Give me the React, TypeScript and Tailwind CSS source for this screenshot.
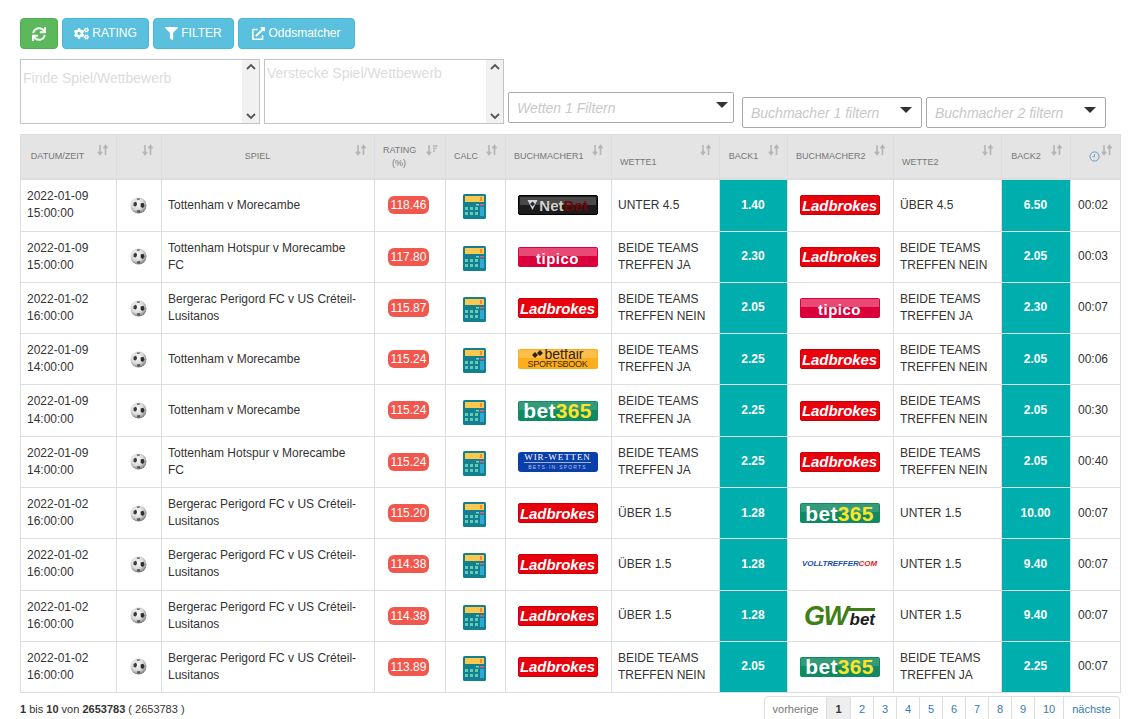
import React from 'react';
import { FaSync, FaCogs, FaFilter, FaExternalLinkAlt } from 'react-icons/fa';

const colWidths = [96, 45, 213, 71, 60, 106, 108, 68, 106, 108, 69, 50];

type Book = 'netbet' | 'tipico' | 'ladbrokes' | 'betfair' | 'bet365' | 'wirwetten' | 'volltreffer' | 'gwbet';

const rows: { date: string; game: string; rating: string; b1: Book; w1: string; back1: string; b2: Book; w2: string; back2: string; time: string }[] = [
  { date: '2022-01-09 15:00:00', game: 'Tottenham v Morecambe', rating: '118.46', b1: 'netbet', w1: 'UNTER 4.5', back1: '1.40', b2: 'ladbrokes', w2: 'ÜBER 4.5', back2: '6.50', time: '00:02' },
  { date: '2022-01-09 15:00:00', game: 'Tottenham Hotspur v Morecambe FC', rating: '117.80', b1: 'tipico', w1: 'BEIDE TEAMS TREFFEN JA', back1: '2.30', b2: 'ladbrokes', w2: 'BEIDE TEAMS TREFFEN NEIN', back2: '2.05', time: '00:03' },
  { date: '2022-01-02 16:00:00', game: 'Bergerac Perigord FC v US Créteil-Lusitanos', rating: '115.87', b1: 'ladbrokes', w1: 'BEIDE TEAMS TREFFEN NEIN', back1: '2.05', b2: 'tipico', w2: 'BEIDE TEAMS TREFFEN JA', back2: '2.30', time: '00:07' },
  { date: '2022-01-09 14:00:00', game: 'Tottenham v Morecambe', rating: '115.24', b1: 'betfair', w1: 'BEIDE TEAMS TREFFEN JA', back1: '2.25', b2: 'ladbrokes', w2: 'BEIDE TEAMS TREFFEN NEIN', back2: '2.05', time: '00:06' },
  { date: '2022-01-09 14:00:00', game: 'Tottenham v Morecambe', rating: '115.24', b1: 'bet365', w1: 'BEIDE TEAMS TREFFEN JA', back1: '2.25', b2: 'ladbrokes', w2: 'BEIDE TEAMS TREFFEN NEIN', back2: '2.05', time: '00:30' },
  { date: '2022-01-09 14:00:00', game: 'Tottenham Hotspur v Morecambe FC', rating: '115.24', b1: 'wirwetten', w1: 'BEIDE TEAMS TREFFEN JA', back1: '2.25', b2: 'ladbrokes', w2: 'BEIDE TEAMS TREFFEN NEIN', back2: '2.05', time: '00:40' },
  { date: '2022-01-02 16:00:00', game: 'Bergerac Perigord FC v US Créteil-Lusitanos', rating: '115.20', b1: 'ladbrokes', w1: 'ÜBER 1.5', back1: '1.28', b2: 'bet365', w2: 'UNTER 1.5', back2: '10.00', time: '00:07' },
  { date: '2022-01-02 16:00:00', game: 'Bergerac Perigord FC v US Créteil-Lusitanos', rating: '114.38', b1: 'ladbrokes', w1: 'ÜBER 1.5', back1: '1.28', b2: 'volltreffer', w2: 'UNTER 1.5', back2: '9.40', time: '00:07' },
  { date: '2022-01-02 16:00:00', game: 'Bergerac Perigord FC v US Créteil-Lusitanos', rating: '114.38', b1: 'ladbrokes', w1: 'ÜBER 1.5', back1: '1.28', b2: 'gwbet', w2: 'UNTER 1.5', back2: '9.40', time: '00:07' },
  { date: '2022-01-02 16:00:00', game: 'Bergerac Perigord FC v US Créteil-Lusitanos', rating: '113.89', b1: 'ladbrokes', w1: 'BEIDE TEAMS TREFFEN NEIN', back1: '2.05', b2: 'bet365', w2: 'BEIDE TEAMS TREFFEN JA', back2: '2.25', time: '00:07' },
];

function SortIcon({ active }: { active?: boolean }) {
  return (
    <svg width="12" height="12" viewBox="0 0 12 12" className="absolute top-[9px] right-[7px]" fill="none" stroke="#b4b4b4" strokeWidth="1.6">
      <path d="M3 1v9M1 7.8 3 10.5 5 7.8" />
      {active ? <path d="M7 2h4.5M7 4.5h3.5M7 7h2" /> : <path d="M8.5 11V2M6.5 4.2 8.5 1.5l2 2.7" />}
    </svg>
  );
}

function ClockIcon() {
  return (
    <svg width="11" height="11" viewBox="0 0 11 11" fill="none" className="inline-block">
      <circle cx="5.5" cy="5.5" r="4.6" stroke="#5b9bd5" strokeWidth="1" />
      <path d="M5.5 3v2.7H3.4" stroke="#9a9a9a" strokeWidth="1" />
    </svg>
  );
}

function Ball() {
  return (
    <svg width="17" height="17" viewBox="0 0 17 17" className="mx-auto block">
      <defs>
        <radialGradient id="ballShade" cx="0.42" cy="0.38" r="0.65">
          <stop offset="0" stopColor="#ffffff" />
          <stop offset="0.6" stopColor="#d8d8d8" />
          <stop offset="1" stopColor="#777777" />
        </radialGradient>
      </defs>
      <circle cx="8.5" cy="8.5" r="8" fill="url(#ballShade)" />
      <path d="M3.5 6 6 4.6 7.2 7 6 9.6 3.6 9Z" fill="#3a3a3a" />
      <path d="M10.6 6.6 13.4 5.8 14.6 8.4 13 11 10.8 10Z" fill="#2e2e2e" />
      <path d="M6.6 1.4 10 1.2 9.6 2.8 7.2 3Z" fill="#6a6a6a" />
      <path d="M6.8 13.4 9.8 13 10.4 15.4 7.4 15.8Z" fill="#555" />
    </svg>
  );
}

function Calc() {
  return (
    <svg width="23" height="25" viewBox="0 0 23 25" className="mx-auto mt-[3px] block">
      <rect x="0" y="0" width="23" height="25" rx="1.5" fill="#14808f" />
      <rect x="2" y="2" width="19" height="6" fill="#f9c84c" />
      <rect x="17" y="3" width="2" height="4" fill="#f08a3c" />
      <rect x="13" y="10" width="3" height="1.5" fill="#7fd3c4" />
      <rect x="17" y="10" width="4" height="1.5" fill="#e2608a" />
      <g fill="#63cbb6">
        <rect x="2" y="13" width="3" height="3" />
        <rect x="7" y="13" width="3" height="3" />
        <rect x="12" y="13" width="3" height="3" />
        <rect x="2" y="18" width="3" height="3" />
        <rect x="7" y="18" width="3" height="3" />
        <rect x="12" y="18" width="3" height="3" />
      </g>
      <rect x="17" y="13" width="4" height="9" fill="#2fa9cf" />
    </svg>
  );
}

function Logo({ book }: { book: Book }) {
  const box = 'relative mx-auto flex h-5 w-20 items-center justify-center overflow-hidden rounded-[2px] whitespace-nowrap';
  const shine = <span className="absolute inset-x-[1px] top-[1px] h-[8px] bg-white/20" />;
  if (book === 'ladbrokes') {
    return (
      <div className={box + ' bg-[#e8000c] border border-[#c80008]'}>
        <span className="text-[15px] font-bold italic tracking-[-0.1px] text-white leading-none">Ladbrokes</span>
      </div>
    );
  }
  if (book === 'netbet') {
    return (
      <div className={box + ' bg-[#1c1c1c] border border-black'}>
        {shine}
        <svg width="11" height="12" viewBox="0 0 10 12" className="relative mr-[1px]">
          <path d="M0 1h10L5 11Z" fill="#d5d5d5" />
          <path d="M5 2.5 7.5 5 5 7.5 2.5 5Z" fill="#1c3040" />
        </svg>
        <span className="relative text-[15px] font-bold leading-none text-[#cfcfcf]">Net</span>
        <span className="relative text-[15px] font-bold leading-none text-[#6d0808]">Bet</span>
      </div>
    );
  }
  if (book === 'tipico') {
    return (
      <div className={box + ' bg-[#d9003c]'}>
        <span className="absolute inset-x-[1px] top-[1px] h-[8px] bg-[#e84a75]" />
        <span className="relative mt-[3px] text-[15px] font-bold leading-none tracking-[0.5px] text-white">tipico</span>
      </div>
    );
  }
  if (book === 'betfair') {
    return (
      <div className={box + ' flex-col bg-[#fdae1d]'}>
        {shine}
        <span className="relative flex items-center text-[14px] leading-[11px] text-[#2a2414]">
          <svg width="12" height="9" viewBox="0 0 12 9" className="mr-[1px]">
            <path d="M0 5 3 2l3 3-3 3Z M5 3 8 0l3 3-3 3Z" fill="#2a2414" />
          </svg>
          betfair
        </span>
        <span className="relative text-[9px] leading-[9px] tracking-[-0.3px] text-[#3a2c08]">SPORTSBOOK</span>
      </div>
    );
  }
  if (book === 'bet365') {
    return (
      <div className={box + ' bg-[#108a62]'}>
        <span className="absolute inset-x-[1px] top-[1px] h-[8px] bg-white/15" />
        <span className="relative text-[21px] font-bold leading-none tracking-[0.3px] text-white">bet</span>
        <span className="relative text-[21px] font-bold leading-none tracking-[0.3px] text-[#fde428]">365</span>
      </div>
    );
  }
  if (book === 'wirwetten') {
    return (
      <div className={box + ' flex-col rounded-[3px] bg-[#0a3ea8]'}>
        <span className="font-['Liberation_Serif',serif] text-[9px] leading-[9px] tracking-[0.9px] text-white border-b border-[#9fb4e0]">WIR-WETTEN</span>
        <span className="mt-[1px] text-[5px] leading-[6px] tracking-[1.2px] text-[#b9c8ea]">BETS·IN·SPORTS</span>
      </div>
    );
  }
  if (book === 'volltreffer') {
    return (
      <div className={box}>
        <span className="text-[8px] font-bold italic leading-none tracking-[-0.1px] text-[#1a4fa8]">VOLLTREFFER</span>
        <span className="text-[8px] font-bold italic leading-none tracking-[-0.1px] text-[#d81c24]">COM</span>
      </div>
    );
  }
  return (
    <div className="mx-auto flex h-[24px] w-[70px] items-end justify-center whitespace-nowrap">
      <span className="text-[27px] font-bold italic leading-[24px] tracking-[-1.5px] text-[#3f7f16]">GW</span>
      <span className="border-t-[3px] border-[#3f7f16] pl-[2px] text-[17px] font-bold italic leading-[17px] text-[#1c1c1c]">bet</span>
    </div>
  );
}

function FakeScrollbar() {
  return (
    <div className="flex w-[17px] flex-col items-center justify-between bg-[#f1f1f1] py-[3px]">
      <svg width="10" height="7" viewBox="0 0 10 7" fill="none" stroke="#555" strokeWidth="1.8"><path d="M1 6 5 2l4 4" /></svg>
      <svg width="10" height="7" viewBox="0 0 10 7" fill="none" stroke="#555" strokeWidth="1.8"><path d="M1 1l4 4 4-4" /></svg>
    </div>
  );
}

function Select({ label, className }: { label: string; className: string }) {
  return (
    <div className={'flex h-[31px] items-center justify-between rounded-[2px] border border-[#aaa] pl-[8px] ' + className}>
      <span className="mt-[2px] text-[14px] italic text-[#c8c8c8]">{label}</span>
      <span className="mb-[6px] h-0 w-0 border-x-[6px] border-t-[6px] border-x-transparent border-t-[#333]" />
    </div>
  );
}

const thBase = 'relative border border-[#dddddd] border-b-2 font-normal text-[9px] leading-[13px] text-[#777] uppercase';
const td = 'border border-[#dddddd]';
const tdText = 'border border-[#dddddd] py-2 pl-[6px] pr-2';

export default function App() {
  return (
    <div className="h-[719px] overflow-hidden bg-white pl-5 pr-[18px] pt-[18px] font-['Liberation_Sans',Arial,sans-serif] text-[12px] text-[#333]">
      <div className="flex gap-1">
        <button className="flex h-[31px] w-[38px] items-center justify-center rounded-[4px] border border-[#4cae4c] bg-[#5cb85c] text-white">
          <FaSync className="text-[14px]" />
        </button>
        <button className="flex h-[31px] w-[87px] items-center justify-center gap-[3px] rounded-[4px] border border-[#46b8da] bg-[#5bc0de] pb-[1px] text-white">
          <FaCogs className="text-[15px]" /> RATING
        </button>
        <button className="flex h-[31px] w-[81px] items-center justify-center gap-[3px] rounded-[4px] border border-[#46b8da] bg-[#5bc0de] pb-[1px] text-white">
          <FaFilter className="text-[13px]" /> FILTER
        </button>
        <button className="flex h-[31px] w-[117px] items-center justify-center gap-[3px] rounded-[4px] border border-[#46b8da] bg-[#5bc0de] pb-[1px] text-white">
          <FaExternalLinkAlt className="text-[13px]" /> Oddsmatcher
        </button>
      </div>

      <div className="mt-[10px] flex h-[65px] items-start">
        <div className="flex h-[65px] w-[240px] border border-[#c4c4c4]">
          <div className="flex-1 pl-[2px] pt-[8px] text-[14px] leading-[20px] text-[#dcdcdc]">Finde Spiel/Wettbewerb</div>
          <FakeScrollbar />
        </div>
        <div className="ml-1 flex h-[65px] w-[240px] border border-[#c4c4c4]">
          <div className="flex-1 pl-[2px] pt-[3px] text-[14px] leading-[20px] text-[#dcdcdc]">Verstecke Spiel/Wettbewerb</div>
          <FakeScrollbar />
        </div>
        <Select label="Wetten 1 Filtern" className="ml-1 mt-[33px] w-[226px] pr-[5px]" />
        <Select label="Buchmacher 1 filtern" className="ml-2 mt-[38px] w-[180px] pr-[9px]" />
        <Select label="Buchmacher 2 filtern" className="ml-1 mt-[38px] w-[180px] pr-[9px]" />
      </div>

      <table className="mt-[10px] w-[1100px] table-fixed border-collapse">
        <colgroup>
          {colWidths.map((w, i) => (
            <col key={i} style={{ width: w }} />
          ))}
        </colgroup>
        <thead>
          <tr className="h-[44.8px] bg-[#e4e4e4]">
            <th className={thBase + ' pl-[8px] pr-[30px] text-center'}>Datum/Zeit<SortIcon /></th>
            <th className={thBase}><SortIcon /></th>
            <th className={thBase + ' pl-[8px] pr-[29px] text-center'}>Spiel<SortIcon /></th>
            <th className={thBase + ' pl-[8px] pr-[30px] text-center'}>Rating<br />(%)<SortIcon active /></th>
            <th className={thBase + ' pl-[8px] pr-[28px] text-center'}>Calc<SortIcon /></th>
            <th className={thBase + ' pl-[8px] pr-[30px] text-center'}>Buchmacher1<SortIcon /></th>
            <th className={thBase + ' pb-[9px] pl-[8px] text-left align-bottom'}>Wette1<SortIcon /></th>
            <th className={thBase + ' pl-[8px] pr-[28px] text-center'}>Back1<SortIcon /></th>
            <th className={thBase + ' pl-[8px] pr-[30px] text-center'}>Buchmacher2<SortIcon /></th>
            <th className={thBase + ' pb-[9px] pl-[8px] text-left align-bottom'}>Wette2<SortIcon /></th>
            <th className={thBase + ' pl-[8px] pr-[28px] text-center'}>Back2<SortIcon /></th>
            <th className={thBase + ' pl-[18px] text-left'}><ClockIcon /><SortIcon /></th>
          </tr>
        </thead>
        <tbody className="leading-[17.14px]">
          {rows.map((r, i) => (
            <tr key={i}>
              <td className={tdText}>{r.date}</td>
              <td className={td + ' pr-[2px]'}><Ball /></td>
              <td className="border border-[#dddddd] py-2 pl-[6px] pr-[14px]">{r.game}</td>
              <td className={td + ' pr-[3px] text-center'}>
                <span className="inline-block h-[18px] rounded-[6px] bg-[#f2574e] px-[2.5px] leading-[18px] text-white">{r.rating}</span>
              </td>
              <td className={td + ' pr-[2px]'}><Calc /></td>
              <td className={td + ' pr-[2px]'}><Logo book={r.b1} /></td>
              <td className={tdText}>{r.w1}</td>
              <td className={td + ' bg-[#00aeae] pr-[1px] text-center font-bold text-white'}>{r.back1}</td>
              <td className={td + ' pr-[2px]'}><Logo book={r.b2} /></td>
              <td className={tdText}>{r.w2}</td>
              <td className={td + ' bg-[#00aeae] pr-[1px] text-center font-bold text-white'}>{r.back2}</td>
              <td className={td + ' py-2 pl-[7px]'}>{r.time}</td>
            </tr>
          ))}
        </tbody>
      </table>

      <div className="mt-[3px] flex items-start justify-between">
        <div className="mt-[5px] text-[11px] leading-[16px]">
          <b>1</b> bis <b>10</b> von <b>2653783</b> ( 2653783 )
        </div>
        <div className="flex h-[30px] rounded-[4px] border border-[#dddddd] text-[11px] leading-[24px] text-[#337ab7]">
          <span className="w-[62px] border-r border-[#dddddd] text-center text-[#777]">vorherige</span>
          <span className="w-[24px] border-r border-[#dddddd] bg-[#eeeeee] text-center font-bold text-[#333]">1</span>
          {['2', '3', '4', '5', '6', '7', '8', '9'].map((p) => (
            <span key={p} className="w-[23px] border-r border-[#dddddd] text-center">{p}</span>
          ))}
          <span className="w-[29px] border-r border-[#dddddd] text-center">10</span>
          <span className="w-[55px] text-center text-[#337ab7]">nächste</span>
        </div>
      </div>
    </div>
  );
}
